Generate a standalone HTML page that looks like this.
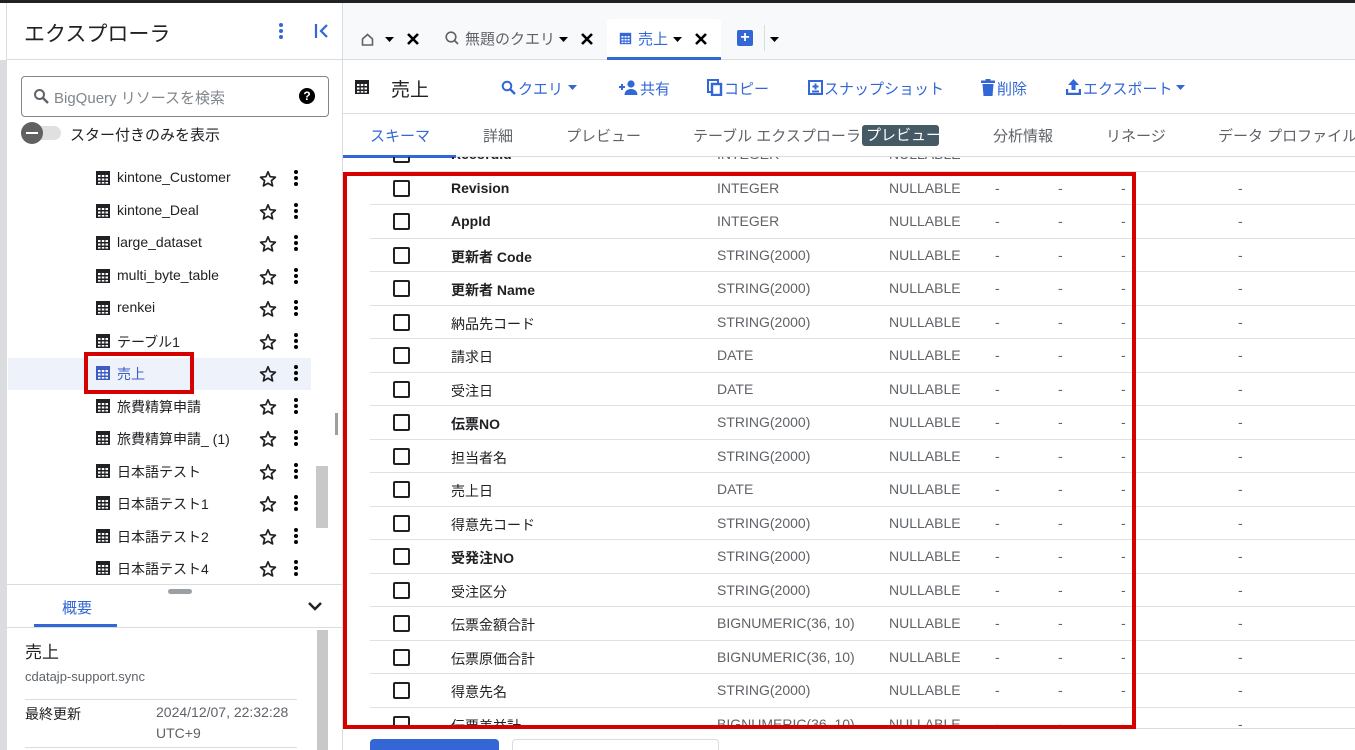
<!DOCTYPE html><html><head><meta charset="utf-8"><style>
*{box-sizing:border-box;margin:0;padding:0}
html,body{width:1355px;height:750px;overflow:hidden}
body{position:relative;background:#fff;font-family:"Liberation Sans","Noto Sans CJK JP",sans-serif;color:#202124}
.a{position:absolute;white-space:nowrap}
.tbl{width:16px;height:16px}
.row{position:absolute;left:0;width:335px;height:32px}
.row .ic{position:absolute;left:88px;top:8px}
.row .t{position:absolute;left:110px;top:7px;font-size:14px}
.row .st{position:absolute;left:252px;top:8px}
.row .dt{position:absolute;left:286px;top:7px}
.tr{position:absolute;left:370px;width:985px;height:33.5px;border-bottom:1px solid #e0e0e0;font-size:14px}
.tr .cb{position:absolute;left:23px;top:8px;width:17px;height:17px;border:2px solid #202124;border-radius:2px}
.tr span{position:absolute;top:8px}
.tr .n{left:81px;color:#202124}
.tr .ty{left:347px;color:#5f6368}
.tr .m{left:519px;color:#5f6368}
.g{color:#5f6368}
.blue{color:#3367d6}
</style></head><body>
<svg width="0" height="0" style="position:absolute"><defs>
<symbol id="tb" viewBox="0 0 16 16"><rect x="1" y="1" width="14" height="14" fill="currentColor"/><g fill="#fff"><rect x="3" y="5" width="2.5" height="2"/><rect x="6.8" y="5" width="2.5" height="2"/><rect x="10.5" y="5" width="2.5" height="2"/><rect x="3" y="8.5" width="2.5" height="2"/><rect x="6.8" y="8.5" width="2.5" height="2"/><rect x="10.5" y="8.5" width="2.5" height="2"/><rect x="3" y="12" width="2.5" height="1.6"/><rect x="6.8" y="12" width="2.5" height="1.6"/><rect x="10.5" y="12" width="2.5" height="1.6"/></g></symbol>
<symbol id="dots" viewBox="0 0 6 18"><circle cx="3" cy="3" r="2"/><circle cx="3" cy="9" r="2"/><circle cx="3" cy="15" r="2"/></symbol>
<symbol id="star" viewBox="0 0 18 18"><path d="M9 1.8l2.1 4.9 5.3.5-4 3.5 1.2 5.2L9 13.2l-4.6 2.7 1.2-5.2-4-3.5 5.3-.5z" fill="none" stroke="#202124" stroke-width="1.7" stroke-linejoin="round"/></symbol>
</defs></svg>
<div class="a" style="left:0;top:0;width:1355px;height:3px;background:#222"></div>
<div class="a" style="left:0;top:60px;width:7px;height:690px;background:#dadce0"></div>
<div class="a" style="left:6px;top:3px;width:1px;height:747px;background:#dadce0"></div>
<!-- sidebar -->
<div class="a" style="left:24px;top:18px;font-size:21px">エクスプローラ</div>
<svg class="a" style="left:278px;top:22px" width="6" height="18" fill="#3367d6"><use href="#dots"/></svg>
<svg class="a" style="left:314px;top:23px" width="16" height="16" viewBox="0 0 16 16"><path d="M2 1v14M13 2L7 8l6 6" stroke="#3367d6" stroke-width="2.2" fill="none"/></svg>
<div class="a" style="left:7px;top:59px;width:335px;height:1px;background:#dadce0"></div>
<div class="a" style="left:21px;top:76px;width:308px;height:41px;border:1px solid #80868b;border-radius:4px"></div>
<svg class="a" style="left:33px;top:88px" width="16" height="16" viewBox="0 0 16 16"><circle cx="6.5" cy="6.5" r="4.5" fill="none" stroke="#5f6368" stroke-width="2"/><path d="M10 10l5 5" stroke="#5f6368" stroke-width="2.4"/></svg>
<div class="a g" style="left:54px;top:87px;font-size:15px;color:#80868b">BigQuery リソースを検索</div>
<div class="a" style="left:299px;top:88px;width:16px;height:16px;border-radius:50%;background:#000;color:#fff;font-size:12px;font-weight:bold;text-align:center;line-height:16px">?</div>
<div class="a" style="left:24px;top:126px;width:37px;height:14px;border-radius:7px;background:#e0e0e0"></div>
<div class="a" style="left:21px;top:122px;width:22px;height:22px;border-radius:50%;background:#616161"><div style="margin:10px 5px;height:2px;background:#fff"></div></div>
<div class="a" style="left:70px;top:124px;font-size:15px">スター付きのみを表示</div>
<div class="a" style="left:8px;top:358px;width:303px;height:32px;background:#eef2fb"></div>
<div class="a" style="left:7px;top:160px;width:335px;height:425px;overflow:hidden">
<div class="row" style="top:2px"><svg class="ic tbl"><use href="#tb"/></svg><span class="t">kintone_Customer</span><svg class="st" width="18" height="18"><use href="#star"/></svg><svg class="dt" width="6" height="18"><use href="#dots"/></svg></div>
<div class="row" style="top:35px"><svg class="ic tbl"><use href="#tb"/></svg><span class="t">kintone_Deal</span><svg class="st" width="18" height="18"><use href="#star"/></svg><svg class="dt" width="6" height="18"><use href="#dots"/></svg></div>
<div class="row" style="top:67px"><svg class="ic tbl"><use href="#tb"/></svg><span class="t">large_dataset</span><svg class="st" width="18" height="18"><use href="#star"/></svg><svg class="dt" width="6" height="18"><use href="#dots"/></svg></div>
<div class="row" style="top:100px"><svg class="ic tbl"><use href="#tb"/></svg><span class="t">multi_byte_table</span><svg class="st" width="18" height="18"><use href="#star"/></svg><svg class="dt" width="6" height="18"><use href="#dots"/></svg></div>
<div class="row" style="top:132px"><svg class="ic tbl"><use href="#tb"/></svg><span class="t">renkei</span><svg class="st" width="18" height="18"><use href="#star"/></svg><svg class="dt" width="6" height="18"><use href="#dots"/></svg></div>
<div class="row" style="top:165px"><svg class="ic tbl"><use href="#tb"/></svg><span class="t">テーブル1</span><svg class="st" width="18" height="18"><use href="#star"/></svg><svg class="dt" width="6" height="18"><use href="#dots"/></svg></div>
<div class="row" style="top:197px"><svg class="ic tbl" style="color:#3c5cc4"><use href="#tb"/></svg><span class="t" style="color:#3c5cc4">売上</span><svg class="st" width="18" height="18"><use href="#star"/></svg><svg class="dt" width="6" height="18"><use href="#dots"/></svg></div>
<div class="row" style="top:230px"><svg class="ic tbl"><use href="#tb"/></svg><span class="t">旅費精算申請</span><svg class="st" width="18" height="18"><use href="#star"/></svg><svg class="dt" width="6" height="18"><use href="#dots"/></svg></div>
<div class="row" style="top:262px"><svg class="ic tbl"><use href="#tb"/></svg><span class="t">旅費精算申請_ (1)</span><svg class="st" width="18" height="18"><use href="#star"/></svg><svg class="dt" width="6" height="18"><use href="#dots"/></svg></div>
<div class="row" style="top:295px"><svg class="ic tbl"><use href="#tb"/></svg><span class="t">日本語テスト</span><svg class="st" width="18" height="18"><use href="#star"/></svg><svg class="dt" width="6" height="18"><use href="#dots"/></svg></div>
<div class="row" style="top:327px"><svg class="ic tbl"><use href="#tb"/></svg><span class="t">日本語テスト1</span><svg class="st" width="18" height="18"><use href="#star"/></svg><svg class="dt" width="6" height="18"><use href="#dots"/></svg></div>
<div class="row" style="top:360px"><svg class="ic tbl"><use href="#tb"/></svg><span class="t">日本語テスト2</span><svg class="st" width="18" height="18"><use href="#star"/></svg><svg class="dt" width="6" height="18"><use href="#dots"/></svg></div>
<div class="row" style="top:392px"><svg class="ic tbl"><use href="#tb"/></svg><span class="t">日本語テスト4</span><svg class="st" width="18" height="18"><use href="#star"/></svg><svg class="dt" width="6" height="18"><use href="#dots"/></svg></div>
</div>
<div class="a" style="left:84px;top:352px;width:110px;height:42px;border:4px solid #d50000"></div>
<div class="a" style="left:316px;top:466px;width:12px;height:62px;background:#c8c8c8"></div>
<div class="a" style="left:335px;top:413px;width:3px;height:22px;background:#9e9e9e"></div>
<div class="a" style="left:7px;top:584px;width:335px;height:1px;background:#dadce0"></div>
<div class="a" style="left:168px;top:589px;width:24px;height:5px;border-radius:3px;background:#9aa0a6"></div>
<div class="a blue" style="left:62px;top:597px;font-size:15px">概要</div>
<div class="a" style="left:34px;top:624px;width:83px;height:3px;background:#3367d6"></div>
<svg class="a" style="left:307px;top:600px" width="16" height="12"><path d="M2 3l6 6 6-6" stroke="#202124" stroke-width="2.5" fill="none"/></svg>
<div class="a" style="left:7px;top:627px;width:335px;height:1px;background:#dadce0"></div>
<div class="a" style="left:25px;top:638px;font-size:17px">売上</div>
<div class="a g" style="left:25px;top:669px;font-size:13px">cdatajp-support.sync</div>
<div class="a" style="left:25px;top:699px;width:272px;height:1px;background:#dadce0"></div>
<div class="a" style="left:25px;top:704px;font-size:14px">最終更新</div>
<div class="a g" style="left:156px;top:704px;font-size:14px">2024/12/07, 22:32:28</div>
<div class="a g" style="left:156px;top:725px;font-size:14px">UTC+9</div>
<div class="a" style="left:25px;top:747px;width:272px;height:1px;background:#dadce0"></div>
<div class="a" style="left:317px;top:630px;width:11px;height:120px;background:#c8c8c8"></div>
<div class="a" style="left:342px;top:3px;width:1px;height:747px;background:#dadce0"></div>
<!-- tab bar -->
<div class="a" style="left:343px;top:3px;width:1012px;height:57px;background:#f8f9fa"></div>
<div class="a" style="left:343px;top:59px;width:1012px;height:1px;background:#dadce0"></div>
<svg class="a" style="left:361px;top:33px" width="13" height="13" viewBox="0 0 13 13"><path d="M1.5 6L6.5 1.5 11.5 6V12H1.5Z" fill="none" stroke="#5f6368" stroke-width="1.6"/></svg>
<svg class="a" style="left:385px;top:37px" width="9" height="5"><path d="M0 0h9L4.5 5z"/></svg>
<svg class="a" style="left:406px;top:32px" width="14" height="14"><path d="M2 2l10 10M12 2L2 12" stroke="#000" stroke-width="2.6"/></svg>
<svg class="a" style="left:445px;top:31px" width="14" height="14" viewBox="0 0 14 14"><circle cx="6" cy="6" r="4.8" fill="none" stroke="#5f6368" stroke-width="1.6"/><path d="M9.5 9.5L13 13" stroke="#5f6368" stroke-width="1.8"/></svg>
<div class="a g" style="left:465px;top:28px;font-size:15px">無題のクエリ</div>
<svg class="a" style="left:559px;top:37px" width="9" height="5"><path d="M0 0h9L4.5 5z"/></svg>
<svg class="a" style="left:580px;top:32px" width="14" height="14"><path d="M2 2l10 10M12 2L2 12" stroke="#000" stroke-width="2.6"/></svg>
<div class="a" style="left:607px;top:19px;width:114px;height:41px;background:#fff;border-radius:4px 4px 0 0;border-bottom:3px solid #3367d6"></div>
<svg class="a" style="left:619px;top:32px;color:#3367d6" width="13" height="13" viewBox="0 0 16 16"><use href="#tb"/></svg>
<div class="a blue" style="left:638px;top:28px;font-size:15px">売上</div>
<svg class="a" style="left:673px;top:37px" width="9" height="5"><path d="M0 0h9L4.5 5z"/></svg>
<svg class="a" style="left:694px;top:32px" width="14" height="14"><path d="M2 2l10 10M12 2L2 12" stroke="#000" stroke-width="2.6"/></svg>
<div class="a" style="left:737px;top:30px;width:16px;height:16px;background:#3367d6;border-radius:2px;color:#fff;font-weight:bold;text-align:center;line-height:16px;font-size:16px">+</div>
<div class="a" style="left:764px;top:25px;width:1px;height:26px;background:#dadce0"></div>
<svg class="a" style="left:770px;top:37px" width="9" height="5"><path d="M0 0h9L4.5 5z"/></svg>
<!-- header -->
<svg class="a tbl" style="left:354px;top:79px"><use href="#tb"/></svg>
<div class="a" style="left:391px;top:75px;font-size:19px">売上</div>
<svg class="a" style="left:501px;top:80px" width="15" height="15" viewBox="0 0 15 15"><circle cx="6" cy="6" r="4.3" fill="none" stroke="#3367d6" stroke-width="2"/><path d="M9 9l5 5" stroke="#3367d6" stroke-width="2.4"/></svg>
<div class="a blue" style="left:518px;top:78px;font-size:15px">クエリ</div>
<svg class="a" style="left:568px;top:85px" width="9" height="5"><path d="M0 0h9L4.5 5z" fill="#3367d6"/></svg>
<svg class="a" style="left:619px;top:79px" width="20" height="16" viewBox="0 0 20 16"><path d="M0 8h6M3 5v6" stroke="#3367d6" stroke-width="2"/><circle cx="12" cy="5" r="3.6" fill="#3367d6"/><path d="M5.5 16c0-4 3-6 6.5-6s6.5 2 6.5 6z" fill="#3367d6"/></svg>
<div class="a blue" style="left:640px;top:78px;font-size:15px">共有</div>
<svg class="a" style="left:707px;top:79px" width="16" height="17" viewBox="0 0 16 17"><rect x="1" y="1" width="10" height="12" fill="none" stroke="#3367d6" stroke-width="2"/><rect x="5" y="5" width="9" height="11" fill="#fff" stroke="#3367d6" stroke-width="2.4"/></svg>
<div class="a blue" style="left:724px;top:78px;font-size:15px">コピー</div>
<svg class="a" style="left:808px;top:80px" width="15" height="15" viewBox="0 0 15 15"><rect x="1" y="1" width="13" height="13" fill="none" stroke="#3367d6" stroke-width="2"/><path d="M7.5 3.5v6M4.5 6.5h6M4 11.5h7" stroke="#3367d6" stroke-width="2"/></svg>
<div class="a blue" style="left:824px;top:78px;font-size:15px">スナップショット</div>
<svg class="a" style="left:981px;top:79px" width="14" height="17" viewBox="0 0 14 17"><rect x="0" y="1.5" width="14" height="2.5" fill="#3367d6"/><rect x="4.5" y="0" width="5" height="2" fill="#3367d6"/><path d="M1.5 5h11l-1 12h-9z" fill="#3367d6"/></svg>
<div class="a blue" style="left:997px;top:78px;font-size:15px">削除</div>
<svg class="a" style="left:1066px;top:79px" width="15" height="16" viewBox="0 0 15 16"><path d="M7.5 0L13 6H9.5v5h-4V6H2z" fill="#3367d6"/><path d="M1 10v5h13v-5" stroke="#3367d6" stroke-width="2.4" fill="none"/></svg>
<div class="a blue" style="left:1083px;top:78px;font-size:15px">エクスポート</div>
<svg class="a" style="left:1176px;top:85px" width="9" height="5"><path d="M0 0h9L4.5 5z" fill="#3367d6"/></svg>
<div class="a" style="left:343px;top:113px;width:1012px;height:1px;background:#dadce0"></div>
<div class="a blue" style="left:370px;top:125px;font-size:15px">スキーマ</div>
<div class="a g" style="left:483px;top:125px;font-size:15px">詳細</div>
<div class="a g" style="left:566px;top:125px;font-size:15px">プレビュー</div>
<div class="a g" style="left:693px;top:125px;font-size:15px">テーブル エクスプローラ</div>
<div class="a" style="left:862px;top:125px;width:77px;height:21px;background:#455a64;border-radius:3px;color:#fff;font-size:15px;padding-left:4px;line-height:21px">プレビュー</div>
<div class="a g" style="left:993px;top:125px;font-size:15px">分析情報</div>
<div class="a g" style="left:1106px;top:125px;font-size:15px">リネージ</div>
<div class="a g" style="left:1218px;top:125px;font-size:15px">データ プロファイル</div>
<div class="a" style="left:343px;top:155px;width:113px;height:3px;background:#3367d6"></div>
<div class="a" style="left:456px;top:156px;width:899px;height:1px;background:#dadce0"></div>
<!-- table -->
<div class="a" style="left:343px;top:157px;width:1012px;height:571px;overflow:hidden">
<div style="position:absolute;left:-343px;top:-157px;width:1355px;height:750px">
<div class="tr" style="top:138px"><div class="cb"></div><span class="n" style="font-weight:bold">RecordId</span><span class="ty">INTEGER</span><span class="m">NULLABLE</span></div>
<div class="tr" style="top:171.5px"><div class="cb"></div><span class="n" style="font-weight:bold">Revision</span><span class="ty">INTEGER</span><span class="m">NULLABLE</span><span style="left:625px" class="g">-</span><span style="left:688px" class="g">-</span><span style="left:751px" class="g">-</span><span style="left:868px" class="g">-</span></div>
<div class="tr" style="top:205px"><div class="cb"></div><span class="n" style="font-weight:bold">AppId</span><span class="ty">INTEGER</span><span class="m">NULLABLE</span><span style="left:625px" class="g">-</span><span style="left:688px" class="g">-</span><span style="left:751px" class="g">-</span><span style="left:868px" class="g">-</span></div>
<div class="tr" style="top:238.5px"><div class="cb"></div><span class="n" style="font-weight:bold">更新者 Code</span><span class="ty">STRING(2000)</span><span class="m">NULLABLE</span><span style="left:625px" class="g">-</span><span style="left:688px" class="g">-</span><span style="left:751px" class="g">-</span><span style="left:868px" class="g">-</span></div>
<div class="tr" style="top:272px"><div class="cb"></div><span class="n" style="font-weight:bold">更新者 Name</span><span class="ty">STRING(2000)</span><span class="m">NULLABLE</span><span style="left:625px" class="g">-</span><span style="left:688px" class="g">-</span><span style="left:751px" class="g">-</span><span style="left:868px" class="g">-</span></div>
<div class="tr" style="top:305.5px"><div class="cb"></div><span class="n">納品先コード</span><span class="ty">STRING(2000)</span><span class="m">NULLABLE</span><span style="left:625px" class="g">-</span><span style="left:688px" class="g">-</span><span style="left:751px" class="g">-</span><span style="left:868px" class="g">-</span></div>
<div class="tr" style="top:339px"><div class="cb"></div><span class="n">請求日</span><span class="ty">DATE</span><span class="m">NULLABLE</span><span style="left:625px" class="g">-</span><span style="left:688px" class="g">-</span><span style="left:751px" class="g">-</span><span style="left:868px" class="g">-</span></div>
<div class="tr" style="top:372.5px"><div class="cb"></div><span class="n">受注日</span><span class="ty">DATE</span><span class="m">NULLABLE</span><span style="left:625px" class="g">-</span><span style="left:688px" class="g">-</span><span style="left:751px" class="g">-</span><span style="left:868px" class="g">-</span></div>
<div class="tr" style="top:406px"><div class="cb"></div><span class="n" style="font-weight:bold">伝票NO</span><span class="ty">STRING(2000)</span><span class="m">NULLABLE</span><span style="left:625px" class="g">-</span><span style="left:688px" class="g">-</span><span style="left:751px" class="g">-</span><span style="left:868px" class="g">-</span></div>
<div class="tr" style="top:439.5px"><div class="cb"></div><span class="n">担当者名</span><span class="ty">STRING(2000)</span><span class="m">NULLABLE</span><span style="left:625px" class="g">-</span><span style="left:688px" class="g">-</span><span style="left:751px" class="g">-</span><span style="left:868px" class="g">-</span></div>
<div class="tr" style="top:473px"><div class="cb"></div><span class="n">売上日</span><span class="ty">DATE</span><span class="m">NULLABLE</span><span style="left:625px" class="g">-</span><span style="left:688px" class="g">-</span><span style="left:751px" class="g">-</span><span style="left:868px" class="g">-</span></div>
<div class="tr" style="top:506.5px"><div class="cb"></div><span class="n">得意先コード</span><span class="ty">STRING(2000)</span><span class="m">NULLABLE</span><span style="left:625px" class="g">-</span><span style="left:688px" class="g">-</span><span style="left:751px" class="g">-</span><span style="left:868px" class="g">-</span></div>
<div class="tr" style="top:540px"><div class="cb"></div><span class="n" style="font-weight:bold">受発注NO</span><span class="ty">STRING(2000)</span><span class="m">NULLABLE</span><span style="left:625px" class="g">-</span><span style="left:688px" class="g">-</span><span style="left:751px" class="g">-</span><span style="left:868px" class="g">-</span></div>
<div class="tr" style="top:573.5px"><div class="cb"></div><span class="n">受注区分</span><span class="ty">STRING(2000)</span><span class="m">NULLABLE</span><span style="left:625px" class="g">-</span><span style="left:688px" class="g">-</span><span style="left:751px" class="g">-</span><span style="left:868px" class="g">-</span></div>
<div class="tr" style="top:607px"><div class="cb"></div><span class="n">伝票金額合計</span><span class="ty">BIGNUMERIC(36, 10)</span><span class="m">NULLABLE</span><span style="left:625px" class="g">-</span><span style="left:688px" class="g">-</span><span style="left:751px" class="g">-</span><span style="left:868px" class="g">-</span></div>
<div class="tr" style="top:640.5px"><div class="cb"></div><span class="n">伝票原価合計</span><span class="ty">BIGNUMERIC(36, 10)</span><span class="m">NULLABLE</span><span style="left:625px" class="g">-</span><span style="left:688px" class="g">-</span><span style="left:751px" class="g">-</span><span style="left:868px" class="g">-</span></div>
<div class="tr" style="top:674px"><div class="cb"></div><span class="n">得意先名</span><span class="ty">STRING(2000)</span><span class="m">NULLABLE</span><span style="left:625px" class="g">-</span><span style="left:688px" class="g">-</span><span style="left:751px" class="g">-</span><span style="left:868px" class="g">-</span></div>
<div class="tr" style="top:707.5px"><div class="cb"></div><span class="n">伝票差益計</span><span class="ty">BIGNUMERIC(36, 10)</span><span class="m">NULLABLE</span><span style="left:625px" class="g">-</span><span style="left:688px" class="g">-</span><span style="left:751px" class="g">-</span><span style="left:868px" class="g">-</span></div>
</div></div>
<div class="a" style="left:343px;top:728px;width:1012px;height:1px;background:#dadce0"></div>
<div class="a" style="left:343px;top:172px;width:793px;height:557px;border:4px solid #d50000"></div>
<div class="a" style="left:370px;top:739px;width:129px;height:11px;background:#3367d6;border-radius:4px 4px 0 0"></div>
<div class="a" style="left:512px;top:739px;width:207px;height:11px;border:1px solid #dadce0;border-bottom:none;border-radius:4px 4px 0 0"></div>
</body></html>
